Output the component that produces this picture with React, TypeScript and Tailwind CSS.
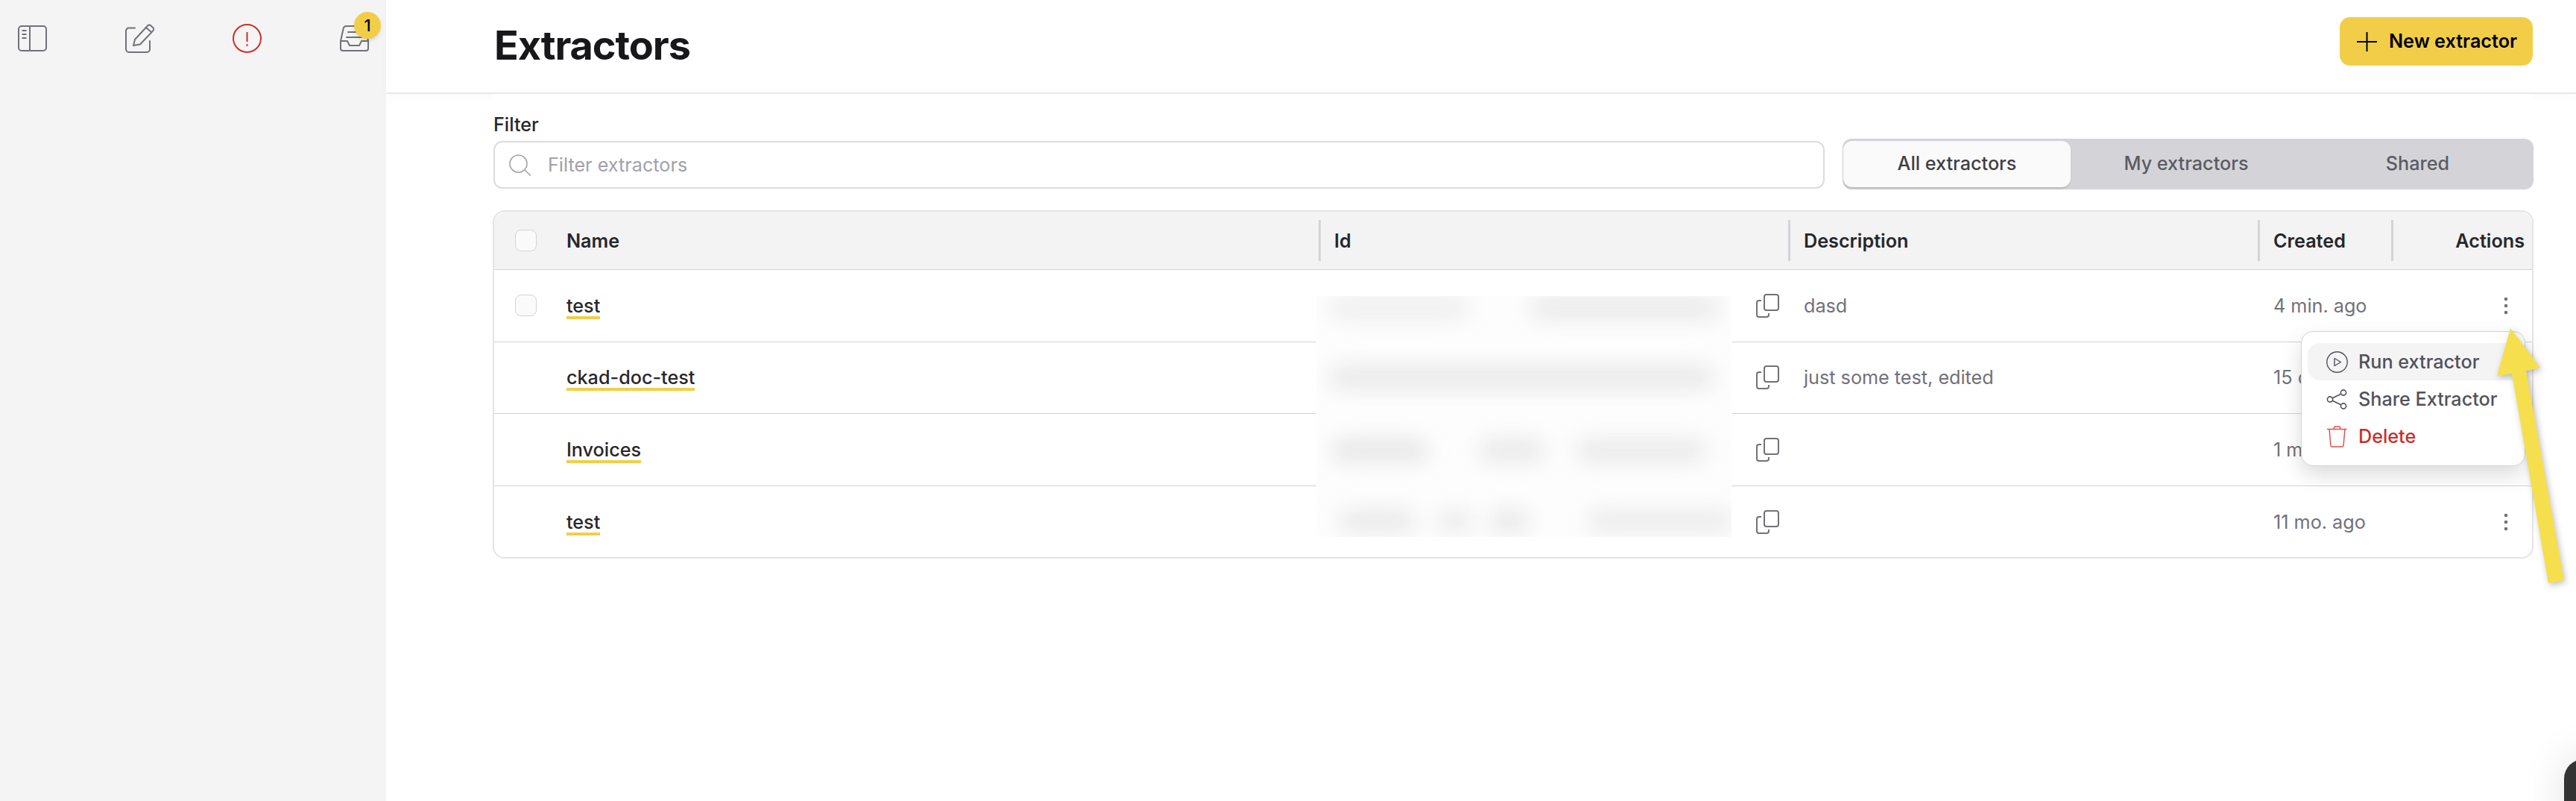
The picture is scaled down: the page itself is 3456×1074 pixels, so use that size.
import { Fragment } from 'react';

/** Row data: the id column holds blurred smudges, given as [gap, width, darkness] */
const ROWS = [
  {
    name: 'test',
    description: 'dasd',
    created: '4 min. ago',
    checkbox: true,
    dots: true,
    band: 93,
    smudges: [
      [16, 190, 'bg-[#eeeeee]'],
      [80, 255, 'bg-[#e9e9e9]'],
    ],
  },
  {
    name: 'ckad-doc-test',
    description: 'just some test, edited',
    created: '15 d. ago',
    checkbox: false,
    dots: false,
    band: 98,
    smudges: [[16, 518, 'bg-[#e8e8e8]']],
  },
  {
    name: 'Invoices',
    description: '',
    created: '1 mo. ago',
    checkbox: false,
    dots: false,
    band: 95,
    smudges: [
      [20, 130, 'bg-[#e6e6e6]'],
      [68, 88, 'bg-[#e8e8e8]'],
      [42, 176, 'bg-[#e9e9e9]'],
    ],
  },
  {
    name: 'test',
    description: '',
    created: '11 mo. ago',
    checkbox: false,
    dots: true,
    band: 37,
    smudges: [
      [30, 104, 'bg-[#e9e9e9]'],
      [28, 48, 'bg-[#ebebeb]'],
      [22, 54, 'bg-[#e8e8e8]'],
      [78, 194, 'bg-[#ebebeb]'],
    ],
  },
];

const COLUMNS = 'grid-cols-[97px_1009px_630px_630px_179px_1fr]';

function PanelIcon() {
  return (
    <svg width={39} height={35} viewBox="0 0 39 35" fill="none" stroke="#71717a" strokeWidth={2}>
      <rect x={1} y={1} width={37} height={33} rx={4} />
      <path d="M16 1v33M5.5 7h6M5.5 12h6M5.5 17h6" />
    </svg>
  );
}

function PencilIcon() {
  return (
    <svg width={39} height={39} viewBox="0 0 39 39" fill="none" stroke="#71717a" strokeWidth={2} strokeLinejoin="round" strokeLinecap="round">
      <path d="M13 5.5H5a4 4 0 0 0-4 4V34a4 4 0 0 0 4 4h24a4 4 0 0 0 4-4V23" />
      <path d="M11 29l2-8L30 2.5a3 3 0 0 1 4.2-.2l3 2.6a3 3 0 0 1 .2 4.2L20 27.5z" />
      <path d="M28 5l7 6" />
    </svg>
  );
}

function AlertIcon() {
  return (
    <svg width={39} height={39} viewBox="0 0 39 39" fill="none" stroke="#c9302c" strokeWidth={2}>
      <circle cx={19.5} cy={19.5} r={18.5} />
      <path d="M19.5 11v13" />
      <circle cx={19.5} cy={28.5} r={1.3} fill="#c9302c" stroke="none" />
    </svg>
  );
}

function InboxIcon() {
  return (
    <svg width={39} height={35} viewBox="0 0 39 35" fill="none" stroke="#71717a" strokeWidth={2} strokeLinejoin="round" strokeLinecap="round">
      <path d="M1 21l3.5-16a4.5 4.5 0 0 1 4.5-4h21a4.5 4.5 0 0 1 4.5 4L38 21" />
      <path d="M1 21h9l3 6h13l3-6h9v10a3 3 0 0 1-3 3H4a3 3 0 0 1-3-3z" />
      <path d="M11 9h17M9 16h21" />
    </svg>
  );
}

function CopyIcon() {
  return (
    <svg width={31} height={32} viewBox="0 0 31 32" fill="none" stroke="#71717a" strokeWidth={2} strokeLinejoin="round" className="shrink-0">
      <rect x={11} y={1} width={19} height={21} rx={3} />
      <path d="M7 9H4a3 3 0 0 0-3 3v16a3 3 0 0 0 3 3h10a3 3 0 0 0 3-3v-2" />
    </svg>
  );
}

function Dots() {
  return (
    <svg width={6} height={24} viewBox="0 0 6 24" fill="#71717a">
      <circle cx={3} cy={3} r={2.3} />
      <circle cx={3} cy={12} r={2.3} />
      <circle cx={3} cy={21} r={2.3} />
    </svg>
  );
}

function Checkbox() {
  return <div className="h-[29px] w-[29px] rounded-lg border border-[#d4d4d8] bg-[#fafafa]" />;
}

function HeaderCell({ label, className }: { label: string; className?: string }) {
  return (
    <div className={`flex h-full items-center pt-[2px] ${className ?? ''}`}>
      <span className="text-[25.2px] font-semibold text-[#27272a]">{label}</span>
    </div>
  );
}

/** Separator in the table header */
function HeaderSeparated({ label, right }: { label: string; right?: boolean }) {
  return (
    <div className="flex h-full items-center">
      <div className="h-[55px] w-[3px] shrink-0 bg-[#d4d4d8]" />
      <span
        className={`pt-[2px] text-[25.2px] font-semibold text-[#27272a] ${right ? 'ml-auto mr-[10px]' : 'ml-[18px]'}`}
      >
        {label}
      </span>
    </div>
  );
}

function MenuItem({ icon, label, active, danger }: { icon: React.ReactNode; label: string; active?: boolean; danger?: boolean }) {
  return (
    <div
      className={`flex h-[50px] items-center rounded-l-2xl pl-[25px] text-[25.2px] font-medium ${
        active ? 'bg-[#f4f4f5]' : ''
      } ${danger ? 'text-[#c9302c]' : 'text-[#52525b]'}`}
    >
      <span className="flex w-[43px] shrink-0">{icon}</span>
      <span className="pt-[1px]">{label}</span>
    </div>
  );
}

export default function App() {
  return (
    <div className="relative flex h-[1074px] w-[3456px] overflow-hidden bg-white font-[Inter,sans-serif]">
      {/* 사이드바 */}
      <aside className="w-[518px] shrink-0 bg-[#f4f4f4]">
        <div className="flex items-center justify-between pl-[24px] pr-[23px] pt-[32px]">
          <PanelIcon />
          <PencilIcon />
          <AlertIcon />
          <div className="relative">
            <InboxIcon />
            <div className="absolute left-[19px] top-[-18px] flex h-[36px] w-[36px] items-center justify-center rounded-full bg-[#f2ce48] text-[22px] font-medium text-black shadow-md">
              1
            </div>
          </div>
        </div>
      </aside>

      <main className="min-w-0 flex-1">
        {/* 상단 헤더 */}
        <header className="flex h-[126px] items-center justify-between border-b-2 border-[#e8e8e8] pl-[145px] pr-[58px] shadow-[0_4px_10px_rgba(0,0,0,0.025)]">
          <h1 className="mt-[-4px] text-[54px] font-bold tracking-[-0.02em] text-[#18181b]">Extractors</h1>
          <button className="mt-[-13px] flex h-[65px] w-[259px] items-center rounded-[14px] bg-[#f2ce48] pl-[23px] text-[25.2px] font-semibold text-black">
            <svg width={27} height={26} viewBox="0 0 27 26" stroke="#000" strokeWidth={2} className="mr-[16px]">
              <path d="M13.5 0v26M0 13h27" />
            </svg>
            New extractor
          </button>
        </header>

        <div className="relative ml-[143px] mr-[57px] bg-white pt-[26px]">
          {/* 필터 + 탭 */}
          <div className="flex items-end gap-[24px]">
            <div className="min-w-0 flex-1">
              <div className="mb-[8px] mt-[1px] pl-[1px] text-[25.2px] leading-[28px] font-medium text-[#27272a]">Filter</div>
              <div className="mb-[1px] ml-[1px] flex h-[64px] items-center rounded-xl border-2 border-[#dcdcdf] bg-white pl-[19px]">
                <svg width={30} height={29} viewBox="0 0 30 29" fill="none" stroke="#a1a1aa" strokeWidth={1.6} className="mr-[22px]">
                  <circle cx={12.5} cy={12.5} r={11.5} />
                  <path d="M21 21l8 7.5" />
                </svg>
                <span className="pt-[1px] text-[25.2px] text-[#a1a1aa]">Filter extractors</span>
              </div>
            </div>
            <div className="grid h-[68px] w-[927px] shrink-0 grid-cols-[305px_310px_1fr] rounded-xl bg-[#d4d4d8] py-[3px] pl-[1px] text-[25.2px] font-medium text-[#5b5b63]">
              <div className="flex items-center justify-center rounded-xl bg-[#fafafa] text-[#3f3f46] shadow-[0_2px_2px_rgba(0,0,0,0.12)]">
                All extractors
              </div>
              <div className="flex items-center justify-center">My extractors</div>
              <div className="flex items-center justify-center">Shared</div>
            </div>
          </div>

          {/* 테이블 */}
          <div className="relative mt-[28px] h-[467px] rounded-2xl border-2 border-[#e4e4e7]">
            <div className={`grid h-[78px] items-center rounded-t-2xl border-b border-[#d4d4d8] bg-[#f3f3f3] ${COLUMNS}`}>
              <div className="pl-[28px]">
                <Checkbox />
              </div>
              <HeaderCell label="Name" />
              <HeaderSeparated label="Id" />
              <HeaderSeparated label="Description" />
              <HeaderSeparated label="Created" />
              <HeaderSeparated label="Actions" right />
            </div>

            {ROWS.map((row, i) => (
              <div
                key={i}
                className={`grid h-[96.5px] items-center ${COLUMNS} ${i < ROWS.length - 1 ? 'border-b border-[#d4d4d8]' : ''}`}
              >
                <div className="pl-[28px]">{row.checkbox && <Checkbox />}</div>
                <div className="pt-[4px]">
                  <span className="inline-block border-b-4 border-[#f2ce48] text-[25.2px] leading-[28px] font-medium text-[#27272a]">
                    {row.name}
                  </span>
                </div>
                <div className="flex justify-end pr-[12px]">
                  <CopyIcon />
                </div>
                <div className="pl-[21px] pt-[2px] text-[25.2px] text-[#71717a]">{row.description}</div>
                <div className="pl-[21px] pt-[2px] text-[25.2px] whitespace-nowrap text-[#71717a]">{row.created}</div>
                <div className="flex justify-end pr-[32px]">{row.dots && <Dots />}</div>
              </div>
            ))}

            {/* 가려진 Id 값 */}
            <div className="absolute left-[1103px] top-[113px] flex h-[323px] w-[557px] flex-col overflow-hidden bg-[#fdfdfd] pt-[1px]">
              {ROWS.map((row, i) => (
                <div key={i} className="flex shrink-0 items-start" style={{ height: row.band }}>
                  {row.smudges.map(([gap, width, tone], j) => (
                    <Fragment key={j}>
                      <div className="shrink-0" style={{ width: gap as number }} />
                      <div className={`h-[30px] shrink-0 rounded-full blur-[14px] ${tone}`} style={{ width: width as number }} />
                    </Fragment>
                  ))}
                </div>
              ))}
            </div>
          </div>
        </div>
      </main>

      {/* 액션 메뉴 */}
      <div className="absolute left-[3087px] top-[444px] h-[181px] w-[301px] rounded-2xl border border-[#d4d4d8] bg-white pl-[8px] pr-[7px] pt-[15px] shadow-[0_12px_28px_rgba(0,0,0,0.14)]">
        <MenuItem
          active
          label="Run extractor"
          icon={
            <svg width={29} height={29} viewBox="0 0 29 29" fill="none" stroke="#52525b" strokeWidth={1.4} strokeLinejoin="round">
              <circle cx={14.5} cy={14.5} r={13.7} />
              <path d="M11 9.5l8.5 5-8.5 5z" />
            </svg>
          }
        />
        <MenuItem
          label="Share Extractor"
          icon={
            <svg width={29} height={27} viewBox="0 0 29 27" fill="none" stroke="#52525b" strokeWidth={1.6}>
              <circle cx={5} cy={13.5} r={3.6} />
              <circle cx={23} cy={4.5} r={3.6} />
              <circle cx={23} cy={22.5} r={3.6} />
              <path d="M8.3 11.8L19.7 6.2M8.3 15.2l11.4 5.6" />
            </svg>
          }
        />
        <MenuItem
          danger
          label="Delete"
          icon={
            <svg width={29} height={30} viewBox="0 0 29 30" fill="none" stroke="#e0524e" strokeWidth={1.5} strokeLinejoin="round">
              <path d="M1 5.5h26.5M10 5.5l1-3.5h7l1 3.5M4 5.5l2 22a1.6 1.6 0 0 0 1.6 1.5h13.8a1.6 1.6 0 0 0 1.6-1.5l2-22" />
            </svg>
          }
        />
      </div>

      {/* 노란 화살표 */}
      <svg
        width={100}
        height={350}
        viewBox="0 0 100 350"
        className="absolute left-[3346px] top-[436px] drop-shadow-[2px_3px_4px_rgba(0,0,0,0.25)]"
      >
        <polygon points="22,4 62,57 43,61 94,342 73,346 24,65 4,68" fill="#f5df4d" />
      </svg>

      {/* 우측 하단 위젯 */}
      <div className="absolute left-[3440px] top-[1018px] h-[90px] w-[90px] rounded-[26px] bg-[#333333] shadow-[0_0_60px_rgba(0,0,0,0.12)]" />
    </div>
  );
}
